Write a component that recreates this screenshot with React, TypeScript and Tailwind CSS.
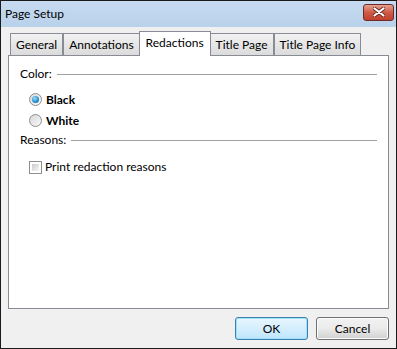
import { useState } from 'react';

const TABS = ['General', 'Annotations', 'Redactions', 'Title Page', 'Title Page Info'];

function Radio({ checked }: { checked: boolean }) {
  return (
    <span className="relative inline-flex h-[13px] w-[13px] items-center justify-center rounded-full border border-[#8e8f8f] bg-gradient-to-br from-[#d8d8d8] to-[#f8f8f8]">
      {checked && (
        <span className="h-[7px] w-[7px] rounded-full bg-[radial-gradient(circle_at_40%_35%,#9fe0fb,#2a8fcf_55%,#0d5d9e)]" />
      )}
    </span>
  );
}

export default function App() {
  const [tab, setTab] = useState('Redactions');
  const [color, setColor] = useState('Black');
  const [reasons, setReasons] = useState(false);

  return (
    <div
      className="flex h-[349px] w-[397px] flex-col border border-[#1b1b1b] bg-[#f0f0f0] text-[12px] text-black"
      style={{ fontFamily: '"Segoe UI", Lato, "Noto Sans", sans-serif' }}
    >
      {/* title bar */}
      <div className="flex h-[26px] items-center justify-between bg-gradient-to-b from-[#c6dbf1] to-[#b9d1ea] pl-[4px] pr-[2px]">
        <span className="text-[12px]">Page Setup</span>
        <button className="mb-[4px] flex h-[17px] w-[31px] items-center justify-center rounded-[3px] border border-[#6d2a2a] bg-gradient-to-b from-[#e5a190] via-[#cf5a45] to-[#c1402c]">
          <svg width="12" height="10" viewBox="0 0 12 10">
            <path d="M1.5 1.5 L10.5 8.5 M10.5 1.5 L1.5 8.5" stroke="#5a2020" strokeWidth="3.6" strokeLinecap="round" />
            <path d="M1.5 1.5 L10.5 8.5 M10.5 1.5 L1.5 8.5" stroke="#ffffff" strokeWidth="2.2" strokeLinecap="round" />
          </svg>
        </button>
      </div>

      <div className="flex flex-1 flex-col px-[7px] pb-[8px] pt-[4px]">
        {/* tabs */}
        <div className="relative z-10 flex items-end pl-[2px]">
          {TABS.map(t => {
            const active = t === tab;
            return (
              <button
                key={t}
                onClick={() => setTab(t)}
                className={
                  active
                    ? '-mx-[1px] -mb-[1px] h-[25px] border border-b-0 border-[#898c95] bg-white px-[6px] pb-[3px] text-[12px]'
                    : 'h-[22px] border border-b-0 border-[#898c95] bg-gradient-to-b from-[#f2f2f2] to-[#dbdbdb] px-[5px] text-[12px]'
                }
              >
                {t}
              </button>
            );
          })}
        </div>

        {/* panel */}
        <div className="flex flex-1 flex-col border border-[#898c95] bg-white px-[11px] pt-[9px]">
          <div className="flex items-center gap-[5px]">
            <span>Color:</span>
            <span className="h-px flex-1 bg-[#a0a0a0]" />
          </div>
          <div className="mt-[10px] flex flex-col gap-[8px] pl-[9px]">
            {['Black', 'White'].map(c => (
              <label key={c} className="flex h-[13px] items-center gap-[4px] font-bold" onClick={() => setColor(c)}>
                <Radio checked={color === c} />
                <span>{c}</span>
              </label>
            ))}
          </div>
          <div className="mt-[4px] flex items-center gap-[5px]">
            <span>Reasons:</span>
            <span className="h-px flex-1 bg-[#a0a0a0]" />
          </div>
          <label className="mt-[9px] flex items-center gap-[3px] pl-[9px]" onClick={() => setReasons(!reasons)}>
            <span className="flex h-[13px] w-[13px] items-center justify-center border border-[#8e8f8f] bg-white p-[2px]">
              <span className="h-full w-full bg-gradient-to-br from-[#cbcbcb] to-[#f6f6f6]" />
            </span>
            <span>Print redaction reasons</span>
          </label>
        </div>

        {/* buttons */}
        <div className="mt-[8px] flex justify-end gap-[8px]">
          <button className="h-[23px] w-[73px] rounded-[3px] border border-[#3c7fb1] bg-gradient-to-b from-[#eaf6fd] to-[#bee6fd] shadow-[inset_0_0_0_1px_#9ee1fb]">
            OK
          </button>
          <button className="h-[23px] w-[73px] rounded-[3px] border border-[#707070] bg-gradient-to-b from-[#f2f2f2] via-[#ebebeb] to-[#d0d0d0] shadow-[inset_0_0_0_1px_#fcfcfc]">
            Cancel
          </button>
        </div>
      </div>
    </div>
  );
}
